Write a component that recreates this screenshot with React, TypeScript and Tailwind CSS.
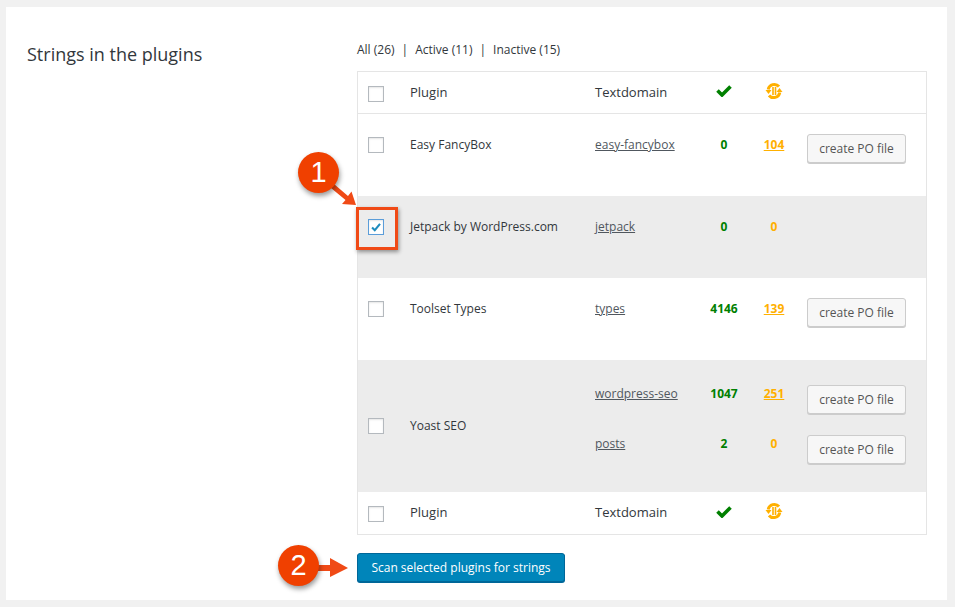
const cols = "grid grid-cols-[52px_185px_104px_50px_50px_1fr]";

function Box({ checked = false }: { checked?: boolean }) {
  return (
    <span className={`flex h-4 w-4 items-center justify-center border bg-white shadow-[inset_0_1px_2px_rgba(0,0,0,0.1)] ${checked ? "border-[#5b9dd9]" : "border-[#b4b9be]"}`}>
      {checked && (
        <svg viewBox="0 0 16 16" className="h-4 w-4">
          <path d="M3.5 8.5 L6.6 11.6 L12.6 4.4" fill="none" stroke="#1e8cbe" strokeWidth="2.4" />
        </svg>
      )}
    </span>
  );
}

function CheckIcon() {
  return (
    <svg viewBox="0 0 16 13" className="h-[13px] w-4">
      <path d="M1.5 6.5 L6 11 L14.5 2.5" fill="none" stroke="#008000" strokeWidth="3.6" />
    </svg>
  );
}

function SyncIcon() {
  return (
    <svg viewBox="0 0 18 18" className="h-[18px] w-[18px]">
      <path d="M3.2 7.5 A6.2 6.2 0 0 1 14 4.6" fill="none" stroke="#ffb000" strokeWidth="3" />
      <path d="M14.8 10.5 A6.2 6.2 0 0 1 4 13.4" fill="none" stroke="#ffb000" strokeWidth="3" />
      <path d="M0.5 8 L6.5 8 L3.5 12 Z M17.5 10 L11.5 10 L14.5 6 Z" fill="#ffb000" />
      <path d="M8 5 L8 13 M10.5 5 L10.5 13" stroke="#ffb000" strokeWidth="1.6" />
    </svg>
  );
}

function PoButton() {
  return (
    <button className="h-[29px] w-[99px] rounded-[3px] border border-[#cccccc] bg-[#f7f7f7] text-[12px] text-[#555555] shadow-[0_1px_0_#cccccc]">
      create PO file
    </button>
  );
}

function HeadRow({ border }: { border: string }) {
  return (
    <div className={`${cols} h-[42px] items-center bg-white ${border}`}>
      <div className="pl-[10px] pt-[2px]"><Box /></div>
      <div className="text-[13px] text-[#32373c]">Plugin</div>
      <div className="text-[13px] text-[#32373c]">Textdomain</div>
      <div className="-mt-1 flex justify-center"><CheckIcon /></div>
      <div className="-mt-1 flex justify-center"><SyncIcon /></div>
      <div />
    </div>
  );
}

type Row = {
  name: string;
  domain: string;
  done: string;
  todo: string;
  button: boolean;
  shaded: boolean;
  checked?: boolean;
};

const rows: Row[] = [
  { name: "Easy FancyBox", domain: "easy-fancybox", done: "0", todo: "104", button: true, shaded: false },
  { name: "Jetpack by WordPress.com", domain: "jetpack", done: "0", todo: "0", button: false, shaded: true, checked: true },
  { name: "Toolset Types", domain: "types", done: "4146", todo: "139", button: true, shaded: false },
];

function Counts({ done, todo }: { done: string; todo: string }) {
  const link = todo !== "0";
  return (
    <>
      <div className="text-center text-[12px] font-bold text-[#008000]">{done}</div>
      <div className={`text-center text-[12px] font-bold text-[#ffb000] ${link ? "underline" : ""}`}>{todo}</div>
    </>
  );
}

function PluginRow({ row }: { row: Row }) {
  return (
    <div className={`${cols} h-[82px] items-start pt-[22px] ${row.shaded ? "bg-[#ececec]" : "bg-white"}`}>
      <div className="pl-[10px] pt-[1px]"><Box checked={row.checked} /></div>
      <div className="text-[12px] leading-[18px] text-[#32373c]">{row.name}</div>
      <div className="text-[12px] leading-[18px] text-[#50575e] underline">{row.domain}</div>
      <Counts done={row.done} todo={row.todo} />
      <div className="-mt-[2px] flex justify-end pr-[20px]">
        {row.button && <PoButton />}
      </div>
    </div>
  );
}

export default function App() {
  return (
    <div className="relative h-[607px] w-[955px] overflow-hidden bg-[#f1f1f1] pl-[6px] pt-[7px] font-['Open_Sans',sans-serif]">
      <div className="flex h-[593px] w-[941px] bg-white">
        <h2 className="w-[351px] pl-[21px] pt-[35px] text-[18px] leading-6 text-[#32373c]">Strings in the plugins</h2>

        <div className="flex w-[570px] flex-col">
          <div className="flex h-[64px] items-start gap-[7px] pt-[34px] text-[12px] leading-[18px] text-[#32373c]">
            <span>All (26)</span><span>|</span><span>Active (11)</span><span>|</span><span>Inactive (15)</span>
          </div>

          <div className="flex h-[464px] flex-col border border-[#e5e5e5]">
            <HeadRow border="border-b border-[#e5e5e5]" />
            {rows.map((row) => (
              <PluginRow key={row.name} row={row} />
            ))}

            <div className={`${cols} h-[132px] items-center bg-[#ececec]`}>
              <div className="pl-[10px]"><Box /></div>
              <div className="text-[12px] text-[#32373c]">Yoast SEO</div>
              <div className="col-span-4 flex flex-col gap-[21px] pb-[3px]">
                <div className="grid h-[29px] grid-cols-[104px_50px_50px_1fr] items-start">
                  <div className="text-[12px] leading-[18px] text-[#50575e] underline">wordpress-seo</div>
                  <Counts done="1047" todo="251" />
                  <div className="flex justify-end pr-[20px]"><PoButton /></div>
                </div>
                <div className="grid h-[29px] grid-cols-[104px_50px_50px_1fr] items-start">
                  <div className="text-[12px] leading-[18px] text-[#50575e] underline">posts</div>
                  <Counts done="2" todo="0" />
                  <div className="flex justify-end pr-[20px]"><PoButton /></div>
                </div>
              </div>
            </div>

            <HeadRow border="" />
          </div>

          <div className="pt-[18px]">
            <button className="h-[29px] w-[208px] rounded-[3px] border border-[#006799] bg-[#0085ba] text-[12px] text-white shadow-[0_1px_0_#006799]">
              Scan selected plugins for strings
            </button>
          </div>
        </div>
      </div>

      {/* callouts drawn over the screenshot */}
      <div className="absolute left-[356px] top-[207px] h-[43px] w-[42px] border-[3px] border-[#f04a16] shadow-[1px_2px_4px_rgba(0,0,0,0.4)]" />

      <svg className="absolute left-[325px] top-[175px]" width="40" height="40" viewBox="0 0 40 40">
        <path d="M9 9 L23 21 L26.5 16.5 L31 30 L17 29 L20.5 25 L6 13 Z" fill="#f04a16" />
      </svg>
      <div className="absolute left-[298px] top-[152px] flex h-[41px] w-[41px] items-center justify-center rounded-full bg-[#f04000] font-['Liberation_Sans',sans-serif] text-[29px] text-white shadow-[1px_3px_5px_rgba(0,0,0,0.4)]">1</div>

      <svg className="absolute left-[310px] top-[555px]" width="40" height="26" viewBox="0 0 40 26">
        <path d="M4 10 L20 10 L20 3 L38 13 L20 22 L20 16 L4 16 Z" fill="#f04a16" />
      </svg>
      <div className="absolute left-[278px] top-[545px] flex h-[41px] w-[41px] items-center justify-center rounded-full bg-[#f04000] font-['Liberation_Sans',sans-serif] text-[29px] text-white shadow-[1px_3px_5px_rgba(0,0,0,0.4)]">2</div>
    </div>
  );
}
